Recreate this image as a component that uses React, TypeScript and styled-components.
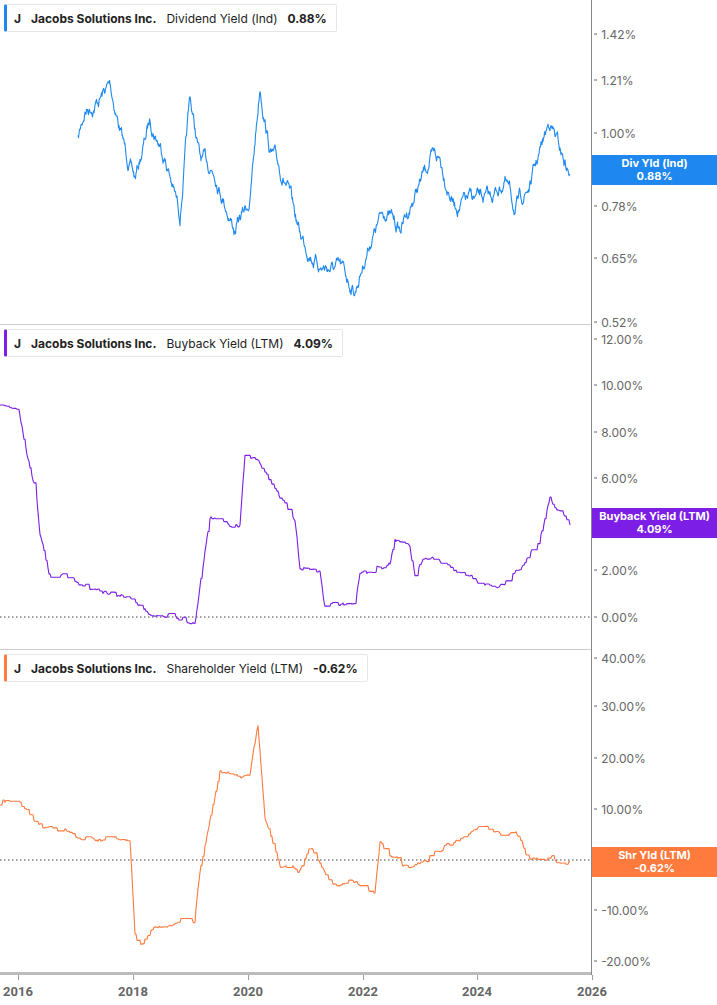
import React from 'react'
import styled, { createGlobalStyle } from 'styled-components'

const Global = createGlobalStyle`
  body { margin: 0; background: #fff; font-family: Inter, "Liberation Sans", Arial, sans-serif; }
`

const Page = styled.div`
  width: 717px;
  height: 1005px;
  display: flex;
  flex-direction: column;
  overflow: hidden;
`

const Panel = styled.div`
  height: 325px;
  display: flex;
  position: relative;
`

const Plot = styled.div<{ $last?: boolean }>`
  width: 592px;
  position: relative;
  border-bottom: ${({ $last }) => ($last ? '3px solid #bbb' : '1px solid #ccc')};
  box-sizing: border-box;
`

const Axis = styled.div`
  width: 125px;
  border-left: 1px solid #888;
  position: relative;
`

const Tick = styled.div`
  position: absolute;
  left: 2px;
  transform: translateY(-50%);
  font-size: 12px;
  color: #666;
  display: flex;
  align-items: center;
  gap: 4px;
  &::before {
    content: '';
    width: 3px;
    height: 1px;
    background: #666;
  }
`

const Badge = styled.div<{ $c: string }>`
  position: absolute;
  left: 0;
  right: 0;
  height: 30px;
  background: ${({ $c }) => $c};
  color: #fff;
  font-size: 11px;
  font-weight: 700;
  text-align: center;
  line-height: 13px;
  display: flex;
  flex-direction: column;
  justify-content: center;
`

const Legend = styled.div<{ $c: string }>`
  position: absolute;
  top: 4px;
  left: 4px;
  height: 26px;
  display: flex;
  align-items: center;
  gap: 10px;
  padding: 0 9px 0 7px;
  background: #fff;
  border: 1px solid #e6e6e6;
  border-left: 3px solid ${({ $c }) => $c};
  border-radius: 2px;
  font-size: 12px;
  color: #222;
  white-space: nowrap;
  z-index: 2;
`

const B = styled.span`
  font-weight: 700;
`

const Chart = styled.svg`
  position: absolute;
  inset: 0;
`

const XAxis = styled.div`
  height: 30px;
  width: 592px;
  position: relative;
`

const Year = styled.div`
  position: absolute;
  top: 0;
  transform: translateX(-50%);
  font-size: 13px;
  font-weight: 700;
  color: #666;
  font-family: Roboto, "Liberation Sans", sans-serif;
  padding-top: 9px;
  &::before {
    content: '';
    position: absolute;
    top: 0;
    left: 50%;
    width: 1px;
    height: 5px;
    background: #999;
  }
`

function rng(seed: number) {
  let s = seed
  return () => {
    s = (s * 16807) % 2147483647
    return s / 2147483647
  }
}

// interpolates key points and adds mean-reverting noise; step mode holds values for a while
function series(pts: number[][], seed: number, amp: number, step: boolean) {
  const r = rng(seed)
  const out: string[] = []
  let n = 0
  let last = pts[0][1]
  for (let i = 0; i < pts.length - 1; i++) {
    const [x0, y0] = pts[i]
    const [x1, y1] = pts[i + 1]
    for (let x = x0; x < x1; x += step ? 1 : 0.5) {
      const t = (x - x0) / (x1 - x0)
      n = 0.88 * n + (r() - 0.5) * amp
      let y = y0 + (y1 - y0) * t + n
      if (step && r() < 0.55 && Math.abs(y - last) < 6) y = last
      last = y
      out.push(`${x.toFixed(1)},${y.toFixed(1)}`)
    }
  }
  const e = pts[pts.length - 1]
  out.push(`${e[0]},${e[1]}`)
  return out.join(' ')
}

const p1 = [[78,140],[85,110],[98,100],[110,85],[118,120],[125,150],[135,180],[150,120],[165,155],[180,215],[190,100],[200,160],[215,170],[235,230],[250,200],[260,85],[270,150],[285,180],[300,235],[320,265],[340,270],[355,290],[370,240],[385,210],[400,230],[415,195],[430,160],[440,160],[455,205],[470,200],[490,200],[505,180],[515,210],[530,185],[550,120],[560,150],[570,175]]
const p2 = [[0,80],[20,90],[30,140],[36,160],[40,210],[50,250],[65,250],[80,260],[125,270],[150,290],[195,295],[200,260],[210,190],[240,200],[245,130],[260,140],[280,170],[295,190],[300,240],[320,245],[325,280],[355,280],[360,250],[390,240],[395,215],[410,220],[415,250],[425,230],[440,235],[455,250],[480,260],[495,265],[520,245],[540,220],[550,175],[570,200]]
const p3 = [[0,155],[20,150],[40,175],[80,185],[130,190],[135,280],[140,290],[180,270],[195,270],[200,220],[220,120],[250,125],[258,80],[265,170],[280,215],[300,220],[310,200],[335,230],[360,235],[375,245],[380,195],[390,205],[400,210],[410,220],[430,205],[460,185],[480,180],[520,190],[530,210],[570,212]]

const panels = [
  {
    color: '#1e88f0', metric: 'Dividend Yield (Ind)', value: '0.88%', badge: 'Div Yld (Ind)', badgeY: 155,
    pts: series(p1, 7, 9, false), zero: null as number | null,
    ticks: [['1.42%',34],['1.21%',80],['1.00%',133],['0.78%',206],['0.65%',258],['0.52%',322]] as [string, number][],
  },
  {
    color: '#7c1ee6', metric: 'Buyback Yield (LTM)', value: '4.09%', badge: 'Buyback Yield (LTM)', badgeY: 183,
    pts: series(p2, 11, 4, true), zero: 292,
    ticks: [['12.00%',14],['10.00%',60],['8.00%',107],['6.00%',153],['2.00%',245],['0.00%',292]] as [string, number][],
  },
  {
    color: '#ff7a3d', metric: 'Shareholder Yield (LTM)', value: '-0.62%', badge: 'Shr Yld (LTM)', badgeY: 197,
    pts: series(p3, 23, 4, true), zero: 210,
    ticks: [['40.00%',8],['30.00%',56],['20.00%',108],['10.00%',159],['-10.00%',260],['-20.00%',311]] as [string, number][],
  },
]

const years = [['2016',18],['2018',133],['2020',248],['2022',363],['2024',477],['2026',592]] as [string, number][]

export default function App() {
  return (
    <Page>
      <Global />
      {panels.map((p, i) => (
        <Panel key={i}>
          <Plot $last={i === 2}>
            <Legend $c={p.color}>
              <B>J</B>
              <B>Jacobs Solutions Inc.</B>
              <span>{p.metric}</span>
              <B>{p.value}</B>
            </Legend>
            <Chart width="592" height="325">
              {p.zero !== null && (
                <line x1="0" x2="592" y1={p.zero} y2={p.zero} stroke="#444" strokeWidth="1" strokeDasharray="1.5 2.5" />
              )}
              <polyline points={p.pts} fill="none" stroke={p.color} strokeWidth="1.1" strokeLinejoin="round" />
            </Chart>
          </Plot>
          <Axis>
            {p.ticks.map(([t, y]) => (
              <Tick key={t} style={{ top: y }}>{t}</Tick>
            ))}
            <Badge $c={p.color} style={{ top: p.badgeY }}>
              <span>{p.badge}</span>
              <span>{p.value}</span>
            </Badge>
          </Axis>
        </Panel>
      ))}
      <XAxis>
        {years.map(([y, x]) => (
          <Year key={y} style={{ left: x }}>{y}</Year>
        ))}
      </XAxis>
    </Page>
  )
}
